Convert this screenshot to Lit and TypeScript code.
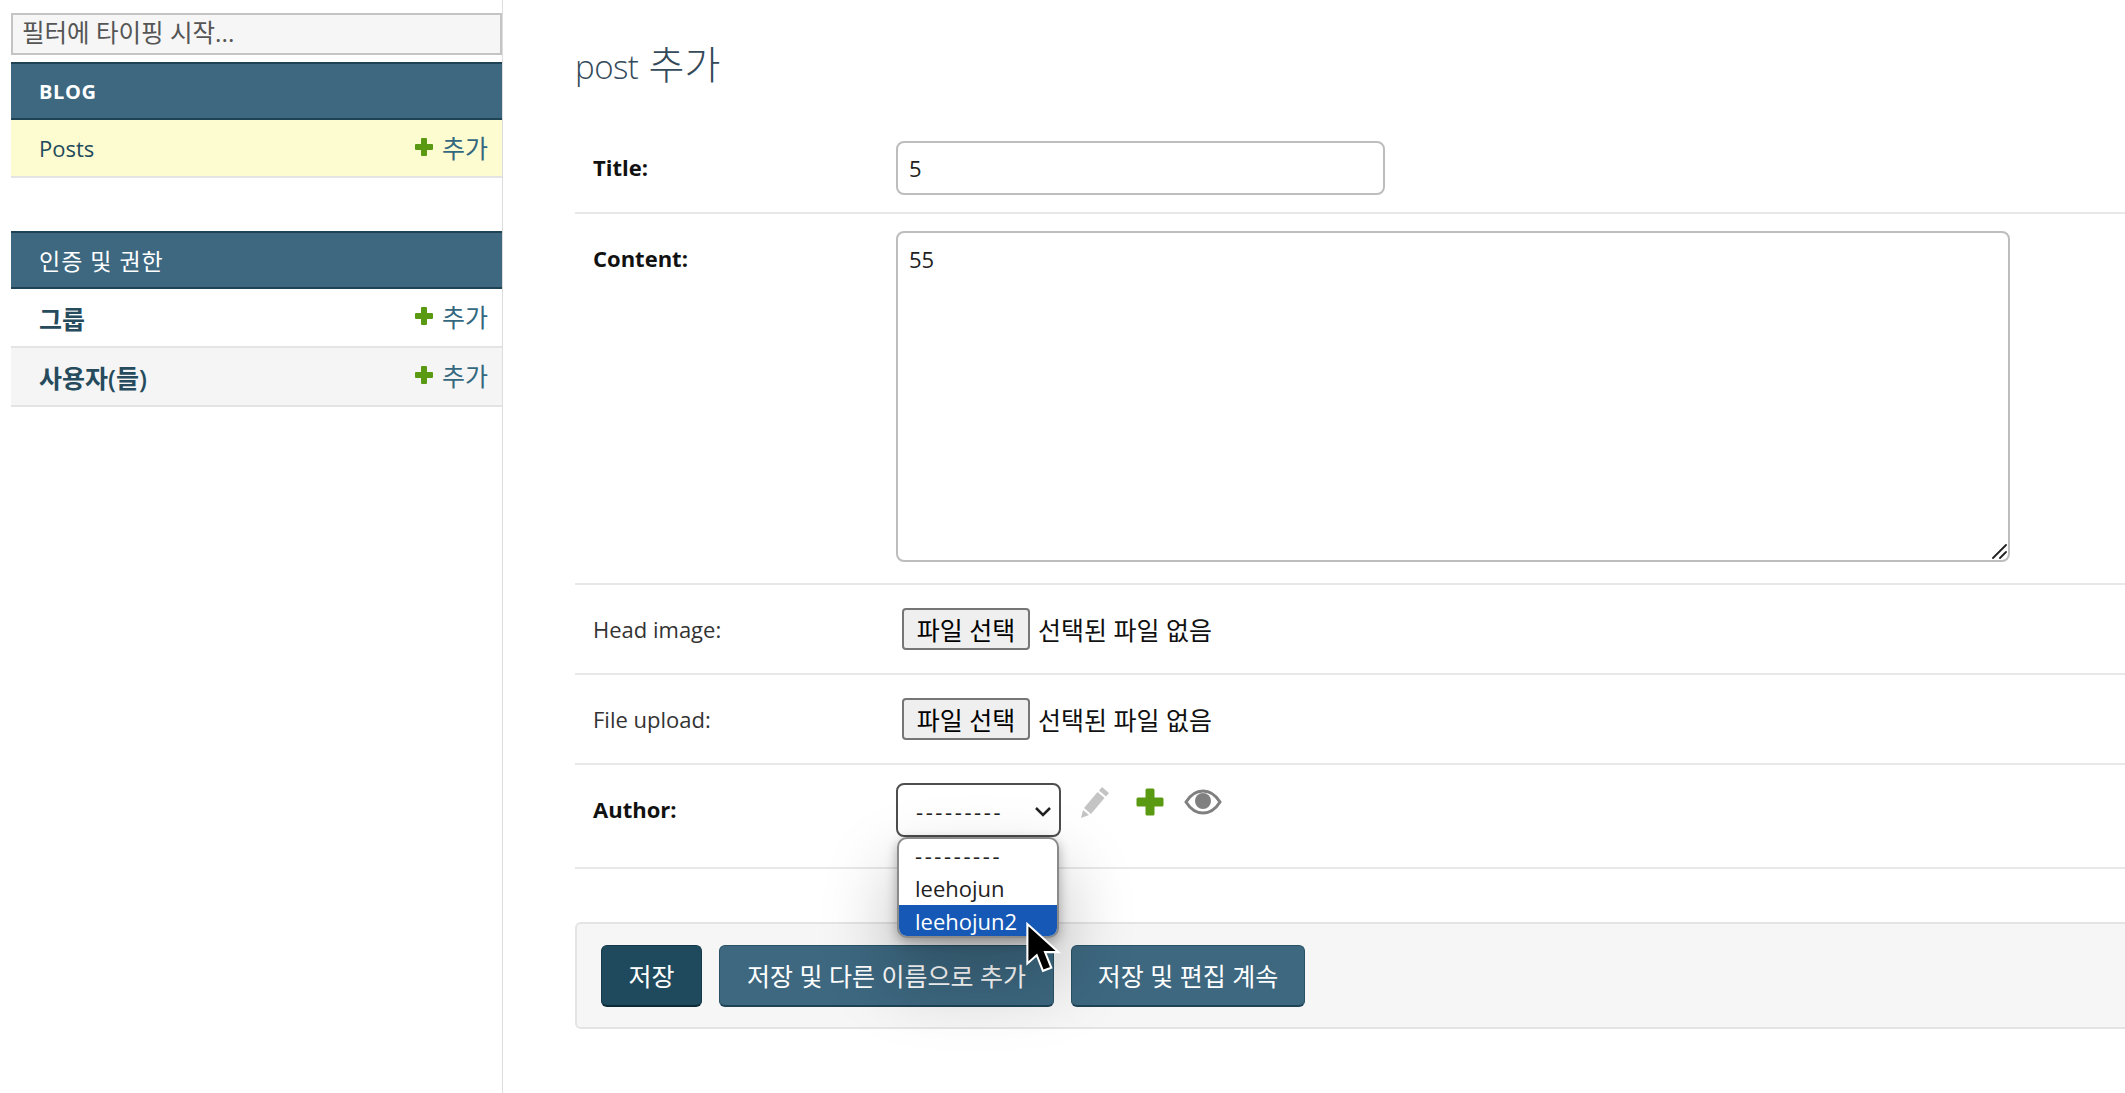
import { LitElement, html, css } from "lit";
import { customElement } from "lit/decorators.js";

const plus = html`<svg class="pl" viewBox="0 0 20 20"><path fill="#5a9a12" d="M8 1h4a1 1 0 0 1 1 1v5h5a1 1 0 0 1 1 1v4a1 1 0 0 1-1 1h-5v5a1 1 0 0 1-1 1H8a1 1 0 0 1-1-1v-5H2a1 1 0 0 1-1-1V8a1 1 0 0 1 1-1h5V2a1 1 0 0 1 1-1z"/></svg>`;

@customElement("app-root")
export class AppRoot extends LitElement {
  static styles = css`
    :host {
      display: block;
      height: 1093px;
      overflow: hidden;
      background: #fff;
      font-family: "Open Sans", "Noto Sans CJK KR", sans-serif;
      font-size: 22px;
      color: #333;
    }
    * { box-sizing: border-box; }
    .page { display: flex; height: 1093px; position: relative; overflow: hidden; }
    .side {
      margin-left: 11px;
      width: 492px;
      flex: none;
      border-right: 1px solid #ddd;
      padding-top: 13px;
    }
    .filter {
      width: 491px;
      height: 42px;
      border: 2px solid #c4c4c4;
      background: #f6f6f6;
      padding: 0 9px;
      font-size: 24.5px;
      color: #555;
      line-height: 35px;
      margin-bottom: 7px;
    }
    .head {
      width: 491px;
      height: 58px;
      background: #3d6880;
      border-top: 2px solid #1d4355;
      border-bottom: 2px solid #1d4355;
      color: #fff;
      display: flex;
      align-items: center;
      padding-left: 28px;
      font-size: 23px;
      letter-spacing: 1px;
    }
    .head.b { font-weight: 700; font-size: 20px; letter-spacing: 0.6px; }
    .row {
      width: 491px;
      height: 59px;
      display: flex;
      align-items: center;
      justify-content: space-between;
      padding: 0 14px 0 28px;
      border-bottom: 2px solid #e4e4e4;
      color: #264b5d;
      font-size: 25px;
    }
    .row.cur { height: 58px; background: #fdfbd0; color: #1f4a5c; font-size: 22px; font-weight: 500; }
    .row.alt { background: #f5f5f5; }
    .row b { font-weight: 600; }
    .add { display: flex; align-items: center; gap: 8px; color: #34687f; font-size: 25px; margin-top: -3px; font-weight: 400; }
    .pl { width: 20px; height: 20px; }
    .gap { height: 53px; }
    .main { flex: 1; padding-left: 72px; min-width: 0; }
    h1 {
      margin: 0;
      height: 128px;
      padding-top: 39px;
      font-weight: 300;
      font-size: 39px;
      line-height: 50px;
      color: #34495a;
    }
    h1 span { font-size: 33px; letter-spacing: -0.5px; }
    .f {
      display: flex;
      border-bottom: 2px solid #e8e8e8;
      padding: 13px 0 0 18px;
    }
    .f label { width: 303px; flex: none; font-size: 22px; color: #333; }
    .f label.req { font-weight: 700; color: #111; }
    .r1 { height: 86px; align-items: flex-start; padding-top: 13px; }
    .r1 label { padding-top: 11px; }
    .r2 { height: 371px; padding-top: 17px; }
    .r2 label { padding-top: 12px; }
    .r3 { height: 90px; align-items: center; padding-top: 0; }
    .r5 { height: 104px; padding-top: 18px; }
    .r5 label { padding-top: 11px; }
    .ti {
      width: 489px;
      height: 54px;
      border: 2px solid #bdbdbd;
      border-radius: 8px;
      padding: 0 11px;
      font: inherit;
      color: #222;
      outline: none;
    }
    .ta { position: relative; width: 1114px; height: 331px; }
    textarea {
      display: block;
      width: 100%;
      height: 100%;
      border: 2px solid #bdbdbd;
      border-radius: 8px;
      padding: 11px;
      font: inherit;
      color: #222;
      outline: none;
      resize: none;
    }
    .grip { position: absolute; right: 3px; bottom: 3px; }
    .file { display: flex; align-items: center; margin-left: 6px; color: #111; font-size: 25px; }
    .fbtn {
      width: 128px;
      height: 42px;
      border: 2px solid #767676;
      border-radius: 4px;
      background: #efefef;
      display: flex;
      align-items: center;
      justify-content: center;
      margin-right: 8px;
      color: #000;
    }
    .selwrap { display: flex; align-items: flex-start; }
    .picker {
      width: 165px;
      height: 54px;
      border: 2px solid #4d4d4d;
      border-radius: 8px;
      background: #fff;
      display: flex;
      align-items: center;
      justify-content: space-between;
      padding: 2px 7px 0 18px;
      color: #222;
      font-size: 22px;
    }
    .dash { letter-spacing: 2.6px; }
    .icons { display: flex; align-items: center; margin: 3px 0 0 19px; }
    .i1 { margin-right: 25px; }
    .i2 { margin-right: 19px; }
    .pop {
      position: absolute;
      left: 897px;
      top: 837px;
      width: 162px;
      height: 101px;
      background: #fff;
      border: 2px solid #8a8a8a;
      border-radius: 10px;
      overflow: hidden;
      box-shadow: 0 4px 12px rgba(0, 0, 0, .3), 0 36px 70px 6px rgba(0, 0, 0, .22);
      z-index: 3;
      font-size: 22px;
      color: #222;
    }
    .opt { height: 33px; padding-left: 16px; line-height: 33px; }
    .opt.on { background: #1558b5; color: #fff; }
    .cursor { position: absolute; left: 1025px; top: 922px; z-index: 4; }
    .submit {
      margin-top: 53px;
      height: 107px;
      border: 2px solid #e4e4e4;
      border-right: 0;
      border-radius: 6px 0 0 6px;
      background: #f6f6f6;
      display: flex;
      align-items: center;
      gap: 17px;
      padding-left: 24px;
    }
    .btn {
      height: 62px;
      border-radius: 6px;
      background: #3d6880;
      border: 1px solid #2a5266;
      border-bottom: 2px solid #1d4355;
      color: #fff;
      display: flex;
      align-items: center;
      justify-content: center;
      font-size: 25px;
    }
    .btn.primary { background: #1f4a5e; border-color: #15394a; border-bottom-color: #0b2a38; }
    .w1 { width: 101px; }
    .w2 { width: 335px; }
    .w3 { width: 234px; }
  `;

  render() {
    const addLink = html`<span class="add">${plus}추가</span>`;
    return html`
      <div class="page">
        <aside class="side">
          <div class="filter">필터에 타이핑 시작...</div>
          <div class="head b">BLOG</div>
          <div class="row cur"><span>Posts</span>${addLink}</div>
          <div class="gap"></div>
          <div class="head">인증 및 권한</div>
          <div class="row"><b>그룹</b>${addLink}</div>
          <div class="row alt"><b>사용자(들)</b>${addLink}</div>
        </aside>
        <main class="main">
          <h1><span>post</span> 추가</h1>
          <div class="f r1"><label class="req">Title:</label><input class="ti" .value=${"5"} /></div>
          <div class="f r2"><label class="req">Content:</label>
            <div class="ta">
              <textarea .value=${"55"}></textarea>
              <svg class="grip" width="15" height="15" viewBox="0 0 15 15"><path d="M1 14L14 1M8 14l6-6" stroke="#222" stroke-width="1.800" stroke-linecap="round" fill="none"/></svg>
            </div>
          </div>
          <div class="f r3"><label>Head image:</label><div class="file"><span class="fbtn">파일 선택</span>선택된 파일 없음</div></div>
          <div class="f r3"><label>File upload:</label><div class="file"><span class="fbtn">파일 선택</span>선택된 파일 없음</div></div>
          <div class="f r5">
            <label class="req">Author:</label>
            <div class="selwrap">
              <div class="picker"><span class="dash">---------</span>
                <svg width="18" height="12" viewBox="0 0 18 12"><path d="M2 3l7 7 7-7" fill="none" stroke="#222" stroke-width="2.500"/></svg>
              </div>
              <div class="icons">
                <svg class="i1" width="30" height="32" viewBox="0 0 30 32"><path fill="#c4c4c4" d="M22 1l7 6-3 3.500-7-6zM17.500 6l7 6L11 28l-7-6zM3 24l6 5-8 3z"/></svg>
                <svg class="i2" width="30" height="30" viewBox="0 0 20 20"><path fill="#5a9a12" d="M8 1h4a1 1 0 0 1 1 1v5h5a1 1 0 0 1 1 1v4a1 1 0 0 1-1 1h-5v5a1 1 0 0 1-1 1H8a1 1 0 0 1-1-1v-5H2a1 1 0 0 1-1-1V8a1 1 0 0 1 1-1h5V2a1 1 0 0 1 1-1z"/></svg>
                <svg width="38" height="26" viewBox="0 0 38 26"><path fill="none" stroke="#808080" stroke-width="3" d="M2 13C7 5 13 2 19 2s12 3 17 11c-5 8-11 11-17 11S7 21 2 13z"/><circle cx="19" cy="12" r="8" fill="#808080"/></svg>
              </div>
            </div>
          </div>
          <div class="submit">
            <div class="btn primary w1">저장</div>
            <div class="btn w2">저장 및 다른 이름으로 추가</div>
            <div class="btn w3">저장 및 편집 계속</div>
          </div>
        </main>
        <div class="pop">
          <div class="opt dash">---------</div>
          <div class="opt">leehojun</div>
          <div class="opt on">leehojun2</div>
        </div>
        <svg class="cursor" width="38" height="54" viewBox="0 0 36 52"><path d="M2 2v38l9-8 6 15 8-3-6-15h13z" fill="#000" stroke="#fff" stroke-width="2"/></svg>
      </div>
    `;
  }
}
